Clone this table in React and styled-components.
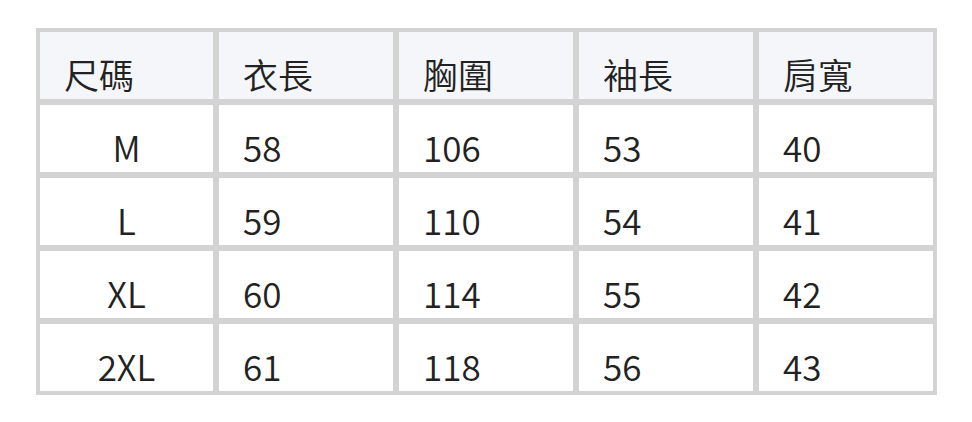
import React from 'react';
import styled, { createGlobalStyle } from 'styled-components';

const GlobalStyle = createGlobalStyle`
  body {
    margin: 0;
    background: #ffffff;
    font-family: "Noto Sans CJK TC", "Noto Sans", sans-serif;
  }
`;

const Page = styled.div`
  padding: 28px 0 0 36px;
`;

const Table = styled.div`
  display: grid;
  grid-template-columns: 173px repeat(4, 174px);
  grid-auto-rows: 67px;
  gap: 6px;
  padding: 4px;
  width: max-content;
  background: #d3d3d3;
`;

const Cell = styled.div`
  display: flex;
  align-items: flex-end;
  justify-content: ${(p) => (p.$center ? 'center' : 'flex-start')};
  padding: 0 0 8px ${(p) => (p.$center ? '0' : '24px')};
  background: ${(p) => (p.$head ? '#f5f6fa' : '#ffffff')};
  color: #222222;
  font-size: 35px;
  font-weight: 350;
  line-height: 1;
  box-sizing: border-box;
`;

const headers = ['尺碼', '衣長', '胸圍', '袖長', '肩寬'];

const rows = [
  ['M', '58', '106', '53', '40'],
  ['L', '59', '110', '54', '41'],
  ['XL', '60', '114', '55', '42'],
  ['2XL', '61', '118', '56', '43'],
];

export default function App() {
  return (
    <>
      <GlobalStyle />
      <Page>
        <Table>
          {headers.map((h) => (
            <Cell key={h} $head>
              {h}
            </Cell>
          ))}
          {rows.map((row) =>
            row.map((v, i) => (
              <Cell key={row[0] + i} $center={i === 0}>
                {v}
              </Cell>
            ))
          )}
        </Table>
      </Page>
    </>
  );
}
